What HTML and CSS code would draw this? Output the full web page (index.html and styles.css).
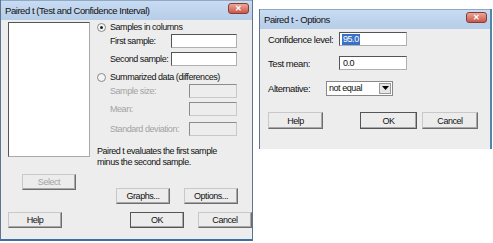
FILE: index.html
```html
<!DOCTYPE html>
<html>
<head>
<meta charset="utf-8">
<link rel="stylesheet" href="styles.css">
</head>
<body>
<div class="screen">
  <div class="dlg d1">
    <div class="titlebar">
      <span class="ttl">Paired t (Test and Confidence Interval)</span>
      <span class="close">✕</span>
    </div>
    <div class="d1-main">
      <div class="leftcol">
        <div class="listbox"></div>
        <div class="btn select dis">Select</div>
      </div>
      <div class="rightcol">
        <div class="row radio-row"><span class="radio on"></span><span>Samples in columns</span></div>
        <div class="row field r1"><span class="lbl">First sample:</span><span class="input w66"></span></div>
        <div class="row field r2"><span class="lbl">Second sample:</span><span class="input w66"></span></div>
        <div class="row radio-row r3"><span class="radio"></span><span>Summarized data (differences)</span></div>
        <div class="row field dis"><span class="lbl">Sample size:</span><span class="input w48"></span></div>
        <div class="row field dis r2"><span class="lbl">Mean:</span><span class="input w48"></span></div>
        <div class="row field dis r4"><span class="lbl">Standard deviation:</span><span class="input w48"></span></div>
        <p class="note">Paired t evaluates the first sample<br>minus the second sample.</p>
        <div class="btnrow gr"><span class="btn">Graphs...</span><span class="btn">Options...</span></div>
      </div>
    </div>
    <div class="btnrow bottom">
      <span class="btn">Help</span>
      <span class="gap1"></span>
      <span class="btn ok">OK</span>
      <span class="btn">Cancel</span>
    </div>
  </div>

  <div class="dlg d2">
    <div class="titlebar">
      <span class="ttl">Paired t - Options</span>
      <span class="close">✕</span>
    </div>
    <div class="d2-body">
      <div class="row2"><span class="lbl2">Confidence level:</span><span class="input w68"><span class="sel">95.0</span></span></div>
      <div class="row2 m1"><span class="lbl2">Test mean:</span><span class="input w68"><span>0.0</span></span></div>
      <div class="row2 m2"><span class="lbl3">Alternative:</span><span class="combo"><span>not equal</span><span class="arrow"><svg width="7" height="4" viewBox="0 0 7 4"><path d="M0 0h7L3.5 4z" fill="#000"/></svg></span></span></div>
      <div class="btnrow b2"><span class="btn w55">Help</span><span class="btn w57 ok">OK</span><span class="btn w56">Cancel</span></div>
    </div>
  </div>
</div>
</body>
</html>
```

FILE: styles.css
```css
* { box-sizing: border-box; }
html, body { margin: 0; padding: 0; background: #fff; }
body { font-family: "Liberation Sans", Arial, sans-serif; font-size: 9px; letter-spacing: -0.45px; color: #111; white-space: nowrap; }
.screen { display: flex; align-items: flex-start; width: 493px; height: 243px; overflow: hidden; }

.dlg {
  background: #ededed;
  border: 1px solid #5d7590;
  border-top: none;
  position: relative;
}
.d1 { width: 253px; height: 241px; border-bottom: 2px solid #3b6fa8; }
.d2 { width: 233px; height: 140px; margin-left: 6px; margin-top: 9px; border-bottom: none; border-right: 2px solid #4a8aa8; }

.titlebar {
  height: 20px;
  background: linear-gradient(#c8dcf2, #b6cde8);
  display: flex; align-items: center; justify-content: space-between;
  padding: 0 3px 0 4px;
  border-top: 1px solid #8ea8c6;
}
.ttl { font-size: 9.5px; color: #111; }
.close {
  width: 21px; height: 11px;
  background: linear-gradient(#e9a89a, #c9574a);
  border: 1px solid #8b3a30; border-radius: 3px;
  color: #fff; font-size: 8px; line-height: 9px; text-align: center; font-weight: bold; letter-spacing: 0;
  margin-top: -4px;
}

.d1-main { display: flex; height: 192px; }
.leftcol { width: 96px; padding-left: 7px; padding-top: 2px; }
.listbox { width: 82px; height: 135px; background: #fff; border: 1px solid #a9a9a9; border-top-color: #555; border-left-color: #555; }
.btn {
  height: 16px; width: 54px;
  display: inline-flex; align-items: center; justify-content: center;
  background: #ececec;
  border: 1px solid #c8c8c8;
  border-right-color: #6d6d6d; border-bottom-color: #6d6d6d;
  box-shadow: inset -1px -1px 0 #a8a8a8;
}
.select { margin-top: 17px; margin-left: 14px; }
.dis { color: #a3a3a3; }

.rightcol { flex: 1; }
.row { display: flex; align-items: center; height: 14px; }
.radio-row { gap: 4px; }
.radio { width: 9px; height: 9px; border-radius: 50%; border: 1px solid #8a8a8a; background: #f4f4f4; position: relative; }
.radio.on::after { content: ""; position: absolute; left: 2px; top: 2px; width: 3px; height: 3px; border-radius: 50%; background: #222; }
.field { padding-left: 13px; }
.field .lbl { flex: 1; }
.r2 { margin-top: 4px; }
.r3 { margin-top: 4px; }
.r4 { margin-top: 6px; }
.input { height: 14px; background: #fff; border: 1px solid #b0b0b0; border-top-color: #555; border-left-color: #555; margin-right: 15px; display: inline-flex; align-items: center; }
.dis .input { background: #ededed; border-color: #c8c8c8; border-top-color: #8c8c8c; border-left-color: #8c8c8c; }
.w66 { width: 66px; }
.w48 { width: 48px; }
.w68 { width: 68px; }
.note { margin: 10px 0 0 0; line-height: 11px; }
.btnrow { display: flex; }
.gr { margin-top: 20px; margin-left: 19px; gap: 14px; }
.bottom { padding-left: 7px; gap: 14px; }
.gap1 { width: 40px; }

.d2-body { padding: 3px 0 0 8px; }
.row2 { display: flex; align-items: center; height: 14px; }
.lbl2 { width: 71px; font-size: 9.5px; }
.lbl3 { width: 58px; font-size: 9.5px; }
.m1 { margin-top: 10px; }
.m2 { margin-top: 11px; }
.input span { padding-left: 3px; }
.input .sel { background: #3a71c8; color: #fff; padding: 0 1px; margin-left: 2px; line-height: 11px; }
.combo { width: 67px; height: 15px; background: #fff; border: 1px solid #888; display: flex; align-items: center; justify-content: space-between; padding-left: 2px; }
.arrow { width: 12px; height: 11px; background: #e6e6e6; border: 1px solid #999; display: flex; align-items: center; justify-content: center; margin-right: 1px; }
.b2 { margin-top: 17px; }
.w55 { width: 55px; height: 17px; }
.w57 { width: 57px; height: 17px; margin-left: 37px; }
.w56 { width: 56px; height: 17px; margin-left: 5px; }
.ok { border-color: #555; }
```
